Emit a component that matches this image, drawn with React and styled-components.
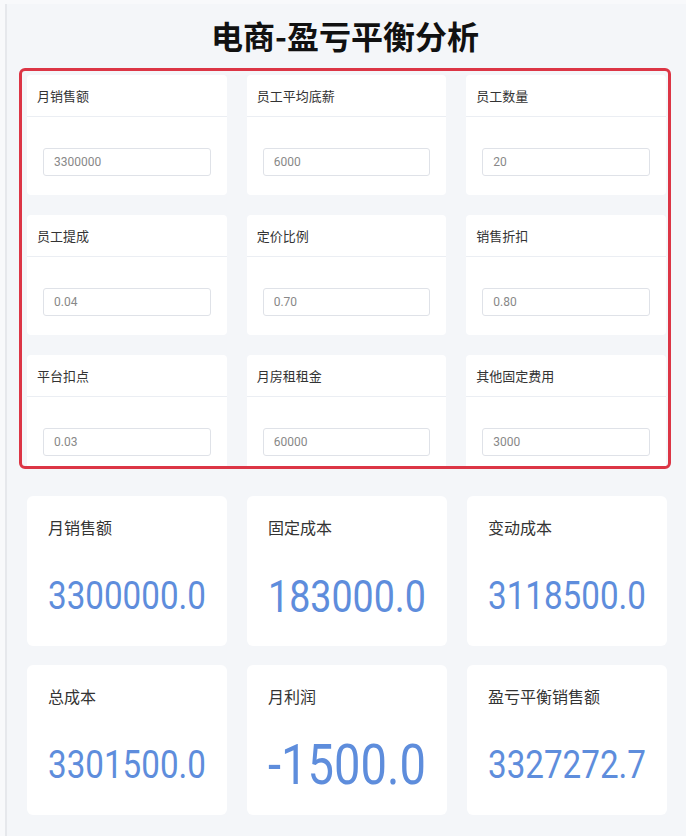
import React, { useLayoutEffect, useRef, useState } from 'react';
import styled, { createGlobalStyle } from 'styled-components';

const GlobalStyle = createGlobalStyle`
    * { box-sizing: border-box; }
    html, body {
        margin: 0;
        padding: 0;
        background: #f8f9fb;
        font-family: Roboto, "Noto Sans CJK SC", sans-serif;
        color: #333;
    }
`;

const inputs = [
    { label: '月销售额', value: '3300000' },
    { label: '员工平均底薪', value: '6000' },
    { label: '员工数量', value: '20' },
    { label: '员工提成', value: '0.04' },
    { label: '定价比例', value: '0.70' },
    { label: '销售折扣', value: '0.80' },
    { label: '平台扣点', value: '0.03' },
    { label: '月房租租金', value: '60000' },
    { label: '其他固定费用', value: '3000' },
];

const results = [
    { label: '月销售额', value: '3300000.0' },
    { label: '固定成本', value: '183000.0' },
    { label: '变动成本', value: '3118500.0' },
    { label: '总成本', value: '3301500.0' },
    { label: '月利润', value: '-1500.0' },
    { label: '盈亏平衡销售额', value: '3327272.7' },
];

// the numbers are drawn narrow, like a DIN face
const SQUEEZE = 0.85;
const BASE = 100;

// grows the number until it fills the card's width
const FitValue = ({ children }) => {
    const boxRef = useRef(null);
    const textRef = useRef(null);
    const [size, setSize] = useState(null);

    useLayoutEffect(() => {
        if (size !== null) return;
        const w = textRef.current.offsetWidth;
        const box = boxRef.current.clientWidth;
        setSize((BASE * box) / (w * SQUEEZE));
    }, [size]);

    useLayoutEffect(() => {
        if (document.fonts && document.fonts.ready) {
            document.fonts.ready.then(() => setSize(null));
        }
    }, []);

    return (
        <ValueBox ref={boxRef}>
            <ValueText ref={textRef} style={{ fontSize: `${size ?? BASE}px` }}>
                {children}
            </ValueText>
        </ValueBox>
    );
};

export default function App() {
    return (
        <>
            <GlobalStyle />
            <Main>
                <Title>电商-盈亏平衡分析</Title>
                <InputPanel>
                    <InputGrid>
                        {inputs.map((item) => (
                            <InputCard key={item.label}>
                                <InputHeader>{item.label}</InputHeader>
                                <InputBody>
                                    <Field defaultValue={item.value} />
                                </InputBody>
                            </InputCard>
                        ))}
                    </InputGrid>
                </InputPanel>
                <ResultGrid>
                    {results.map((item) => (
                        <ResultCard key={item.label}>
                            <ResultLabel>{item.label}</ResultLabel>
                            <FitValue>{item.value}</FitValue>
                        </ResultCard>
                    ))}
                </ResultGrid>
            </Main>
        </>
    );
}

const Main = styled.main`
    margin: 4px 0 0 5px;
    min-height: 832px;
    background: #f4f6f9;
    border-left: 2px solid #e6e8ec;
    padding: 0 15px 21px 12px;
`;

const Title = styled.h1`
    margin: 0;
    padding: 11px 0 13px;
    line-height: 40px;
    font-size: 32px;
    font-weight: 700;
    color: #111;
    text-align: center;
    font-family: "Noto Sans CJK SC", sans-serif;
`;

const InputPanel = styled.section`
    height: 401px;
    overflow: hidden;
    border: 3px solid #dc3545;
    border-radius: 6px;
    padding: 4px 2px 0 5px;
`;

const InputGrid = styled.div`
    display: grid;
    grid-template-columns: repeat(3, minmax(0, 1fr));
    gap: 20px;
`;

const InputCard = styled.div`
    background: #fff;
    border-radius: 4px;
    height: 120px;
`;

const InputHeader = styled.div`
    height: 42px;
    line-height: 41px;
    padding: 0 10px;
    font-size: 13px;
    color: #333;
    border-bottom: 1px solid #ebeef3;
    font-family: "Noto Sans CJK SC", sans-serif;
`;

const InputBody = styled.div`
    padding: 31px 16px 0;
`;

const Field = styled.input`
    display: block;
    width: 100%;
    height: 28px;
    padding: 0 10px;
    border: 1px solid #dfe2e8;
    border-radius: 3px;
    background: #fff;
    font-family: Roboto, sans-serif;
    font-size: 12px;
    color: #888;
    outline: none;
`;

const ResultGrid = styled.div`
    display: grid;
    grid-template-columns: repeat(3, minmax(0, 1fr));
    gap: 19px 20px;
    margin-top: 27px;
    padding: 0 4px 0 8px;
`;

const ResultCard = styled.div`
    min-width: 0;
    background: #fff;
    border-radius: 6px;
    height: 150px;
    padding: 20px 21px 10px;
`;

const ResultLabel = styled.div`
    font-size: 16px;
    line-height: 22px;
    color: #333;
    font-family: "Noto Sans CJK SC", sans-serif;
`;

const ValueBox = styled.div`
    min-width: 0;
    margin-top: 20px;
    height: 78px;
    display: flex;
    align-items: center;
    white-space: nowrap;
    overflow: hidden;
`;

const ValueText = styled.span`
    flex: none;
    display: inline-block;
    line-height: 1;
    color: #5e8ddc;
    font-family: Roboto, sans-serif;
    transform: scaleX(${SQUEEZE});
    transform-origin: left center;
`;
